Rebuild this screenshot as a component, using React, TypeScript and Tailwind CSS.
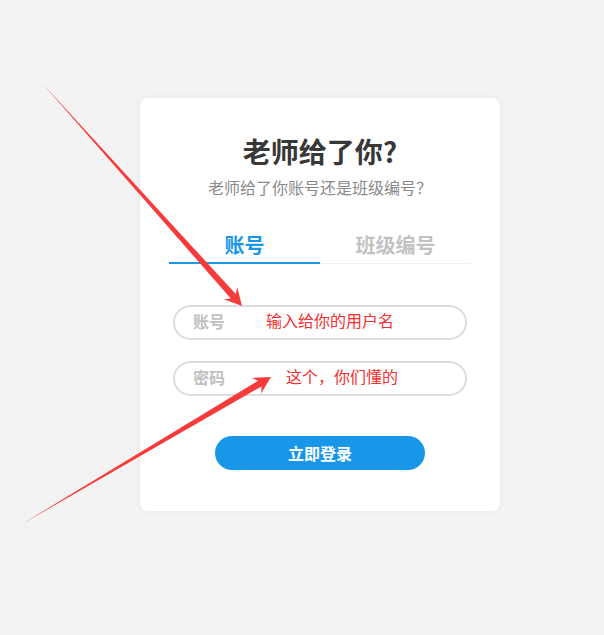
import React from "react";

const font = { fontFamily: '"Noto Sans CJK SC", "Noto Sans", sans-serif' };

export default function App() {
  return (
    <div className="relative w-[604px] h-[635px] bg-[#f3f3f3] overflow-hidden" style={font}>
      <div className="absolute left-[140px] top-[98px] w-[360px] bg-white rounded-[8px] shadow-[0_0_6px_rgba(0,0,0,0.06)] px-[29px] pt-[35px] pb-[41px]">
        <div className="text-center text-[28px] leading-[36px] font-bold text-[#383838]">老师给了你?</div>
        <div className="mt-[6px] text-center text-[16px] leading-[24px] text-[#8a8a8a]">老师给了你账号还是班级编号？</div>
        <div className="mt-[32px] flex items-start">
          <div className="flex-1 text-center text-[20px] leading-[28px] font-bold text-[#1897e9] pb-[3px] border-b-2 border-[#1897e9]">账号</div>
          <div className="flex-1 text-center text-[20px] leading-[28px] font-bold text-[#c2c2c2] pb-[4px] border-b border-[#eeeeee]">班级编号</div>
        </div>
        <div className="mt-[41px] px-[4px] flex flex-col gap-[21px]">
          <div className="h-[35px] rounded-full border-2 border-[#dddddd] flex items-center pl-[18px]">
            <span className="text-[16px] leading-[20px] font-bold text-[#c0c0c0] -translate-y-[2px]">账号</span>
            <span className="ml-[41px] text-[16px] leading-[20px] text-[#f23030] -translate-y-[3px]">输入给你的用户名</span>
          </div>
          <div className="h-[35px] rounded-full border-2 border-[#dddddd] flex items-center pl-[18px]">
            <span className="text-[16px] leading-[20px] font-bold text-[#c0c0c0] -translate-y-[2px]">密码</span>
            <span className="ml-[61px] text-[16px] leading-[20px] text-[#f23030] -translate-y-[3px]">这个，你们懂的</span>
          </div>
        </div>
        <div className="mt-[40px] flex justify-center">
          <div className="w-[210px] h-[34px] rounded-full bg-[#1897e9] flex items-center justify-center text-white text-[16px] font-bold">立即登录</div>
        </div>
      </div>
      <svg className="absolute inset-0 pointer-events-none" width="604" height="635" viewBox="0 0 604 635">
        <polygon
          fill="#f73b3b"
          points="42,83 230.8,298.5 223.9,299.3 242,306 237.3,287.3 235.8,294.1"
        />
        <polygon
          fill="#f73b3b"
          points="22,524 261.5,386.4 261,393.4 271,377 251.8,377.9 258.1,380.8"
        />
      </svg>
    </div>
  );
}
